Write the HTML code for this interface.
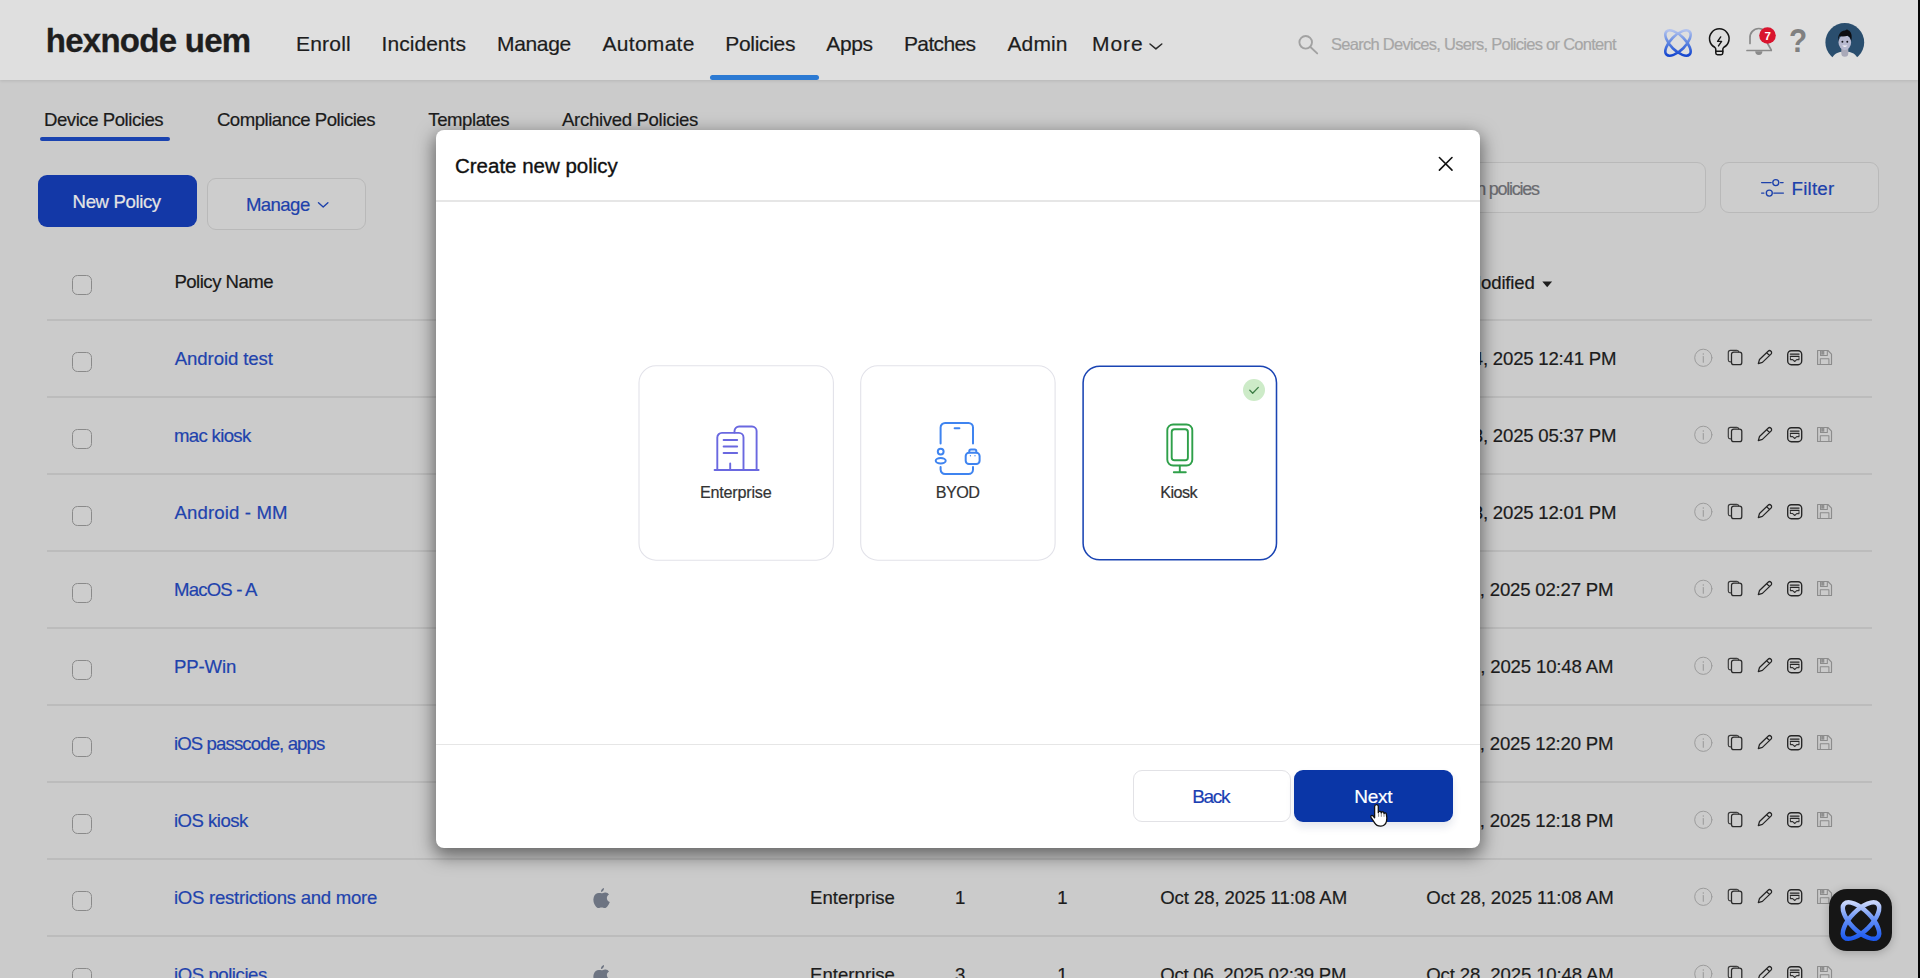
<!DOCTYPE html>
<html lang="en"><head><meta charset="utf-8"><title>Hexnode UEM - Policies</title>
<style>
html,body{margin:0;padding:0}
body{width:1920px;height:978px;overflow:hidden;position:relative;background:#cbcbcb;font-family:"Liberation Sans",sans-serif}
.a{position:absolute}
.t{position:absolute;white-space:nowrap;font-family:"Liberation Sans",sans-serif;-webkit-text-stroke:.2px currentColor}
svg{position:absolute;overflow:visible}
#hdr{left:0;top:0;width:1918px;height:80px;background:#dfdfdf;box-shadow:0 1px 3px rgba(0,0,0,.10)}
#edge{left:1918px;top:0;width:2px;height:978px;background:#050505}
.nu{left:710px;top:75.4px;width:109.3px;height:4.6px;border-radius:2.5px;background:#2c7ad3}
.tu{left:39.5px;top:137.3px;width:130px;height:3.6px;border-radius:2px;background:#1a43b0}
.btnp{left:38px;top:175px;width:159px;height:52px;border-radius:9px;background:#1338a7}
.btno{border:1px solid #b9b9b9;border-radius:9px;box-sizing:border-box;background:#cdcdcd}
.hl{left:46.5px;width:1825.5px;height:1.8px;background:#bcbcbc}
.cb{left:72px;width:18.4px;height:18px;border:1px solid #8a8a8a;border-radius:5.5px;background:#cdcdcd}
#modal{left:436px;top:130px;width:1044px;height:718px;background:#fff;border-radius:8px;box-shadow:0 6px 18px 2px rgba(0,0,0,.5)}
.ml{left:436px;width:1044px;height:1.6px;background:#e6e6e6}
.bback{left:1133px;top:770.3px;width:156px;height:50px;border:1px solid #e2e2e6;border-radius:9px;background:#fff}
.bnext{left:1294.4px;top:770px;width:159px;height:52px;border-radius:9px;background:#0a36a7;box-shadow:0 5px 9px rgba(20,40,90,.11)}
#chat{left:1829px;top:888.8px;width:62.5px;height:62.5px;border-radius:18px;background:#161616;box-shadow:0 2px 10px rgba(0,0,0,.22)}

</style></head>
<body>
<div id="hdr" class="a"></div>
<div class="a nu"></div>
<div class="a tu"></div>
<div class="a btnp"></div>
<div class="a btno" style="left:207px;top:178.3px;width:159px;height:51.3px"></div>
<div class="a btno" style="left:1300px;top:162.3px;width:406px;height:51px"></div>
<div class="a btno" style="left:1720.2px;top:162.3px;width:158.6px;height:51px"></div>
<div class="a hl" style="top:318.8px"></div>
<div class="a hl" style="top:395.8px"></div>
<div class="a hl" style="top:472.8px"></div>
<div class="a hl" style="top:549.8px"></div>
<div class="a hl" style="top:626.8px"></div>
<div class="a hl" style="top:703.8px"></div>
<div class="a hl" style="top:780.8px"></div>
<div class="a hl" style="top:857.8px"></div>
<div class="a hl" style="top:934.8px"></div>
<div class="a cb" style="top:275px"></div>
<div class="a cb" style="top:352px"></div>
<div class="a cb" style="top:429px"></div>
<div class="a cb" style="top:506px"></div>
<div class="a cb" style="top:583px"></div>
<div class="a cb" style="top:660px"></div>
<div class="a cb" style="top:737px"></div>
<div class="a cb" style="top:814px"></div>
<div class="a cb" style="top:891px"></div>
<div class="a cb" style="top:968px"></div>
<svg class="a" style="left:1694px;top:348px" width="142" height="20" viewBox="0 0 142 20" ><g fill="none" stroke-linecap="round" stroke-linejoin="round">
<circle cx="9.3" cy="9.8" r="8.6" stroke="#9c9c9c" stroke-width="1"/>
<path d="M9.3 8.6v5.6" stroke="#9c9c9c" stroke-width="1.1"/><circle cx="9.3" cy="5.9" r=".75" fill="#9c9c9c"/>
<path d="M36.6 13.8h-.4a1.9 1.9 0 0 1-1.9-1.9V4.4a2.1 2.1 0 0 1 2.1-2.1h6.3a2 2 0 0 1 2 1.7" stroke="#3a3a3a" stroke-width="1.15"/>
<rect x="37.5" y="4" width="10.3" height="12.7" rx="2.3" stroke="#2a2a2a" stroke-width="1.25"/>
<path d="M64.3 15.6l1.2-4.1 8.600-8.300a2.050 2.050 0 0 1 2.900 2.900l-8.600 8.300z M72.6 4.600l2.900 2.900" stroke="#262626" stroke-width="1.25"/>
<rect x="93.700" y="2.700" width="14" height="14" rx="3.600" stroke="#262626" stroke-width="1.35"/>
<path d="M96.400 6.100h8.600M96.400 8.300h8.600" stroke="#262626" stroke-width="1.35"/>
<path d="M96.400 9.400v2.200h2.300l2 1.900 2-1.900h2.300V9.400" stroke="#333" stroke-width="1.05"/>
<path d="M123.600 2.500h10.300l3.600 3.600v10.400h-13.900z" stroke="#8c8c8c" stroke-width="1.15"/>
<path d="M126.500 2.600v4.900h6.800V2.600" stroke="#8c8c8c" stroke-width="1.05"/><rect x="127.200" y="2.800" width="3.100" height="3.900" fill="#8f8f8f"/>
<path d="M126.300 16.400v-5.600h8.600v5.600" stroke="#8c8c8c" stroke-width="1.05"/>
</g></svg>
<svg class="a" style="left:1694px;top:425px" width="142" height="20" viewBox="0 0 142 20" ><g fill="none" stroke-linecap="round" stroke-linejoin="round">
<circle cx="9.3" cy="9.8" r="8.6" stroke="#9c9c9c" stroke-width="1"/>
<path d="M9.3 8.6v5.6" stroke="#9c9c9c" stroke-width="1.1"/><circle cx="9.3" cy="5.9" r=".75" fill="#9c9c9c"/>
<path d="M36.6 13.8h-.4a1.9 1.9 0 0 1-1.9-1.9V4.4a2.1 2.1 0 0 1 2.1-2.1h6.3a2 2 0 0 1 2 1.7" stroke="#3a3a3a" stroke-width="1.15"/>
<rect x="37.5" y="4" width="10.3" height="12.7" rx="2.3" stroke="#2a2a2a" stroke-width="1.25"/>
<path d="M64.3 15.6l1.2-4.1 8.600-8.300a2.050 2.050 0 0 1 2.900 2.900l-8.600 8.300z M72.6 4.600l2.900 2.900" stroke="#262626" stroke-width="1.25"/>
<rect x="93.700" y="2.700" width="14" height="14" rx="3.600" stroke="#262626" stroke-width="1.35"/>
<path d="M96.400 6.100h8.600M96.400 8.300h8.600" stroke="#262626" stroke-width="1.35"/>
<path d="M96.400 9.400v2.200h2.300l2 1.900 2-1.900h2.300V9.400" stroke="#333" stroke-width="1.05"/>
<path d="M123.600 2.500h10.300l3.600 3.600v10.400h-13.900z" stroke="#8c8c8c" stroke-width="1.15"/>
<path d="M126.500 2.600v4.900h6.800V2.600" stroke="#8c8c8c" stroke-width="1.05"/><rect x="127.200" y="2.800" width="3.100" height="3.900" fill="#8f8f8f"/>
<path d="M126.300 16.400v-5.600h8.600v5.600" stroke="#8c8c8c" stroke-width="1.05"/>
</g></svg>
<svg class="a" style="left:1694px;top:502px" width="142" height="20" viewBox="0 0 142 20" ><g fill="none" stroke-linecap="round" stroke-linejoin="round">
<circle cx="9.3" cy="9.8" r="8.6" stroke="#9c9c9c" stroke-width="1"/>
<path d="M9.3 8.6v5.6" stroke="#9c9c9c" stroke-width="1.1"/><circle cx="9.3" cy="5.9" r=".75" fill="#9c9c9c"/>
<path d="M36.6 13.8h-.4a1.9 1.9 0 0 1-1.9-1.9V4.4a2.1 2.1 0 0 1 2.1-2.1h6.3a2 2 0 0 1 2 1.7" stroke="#3a3a3a" stroke-width="1.15"/>
<rect x="37.5" y="4" width="10.3" height="12.7" rx="2.3" stroke="#2a2a2a" stroke-width="1.25"/>
<path d="M64.3 15.6l1.2-4.1 8.600-8.300a2.050 2.050 0 0 1 2.900 2.900l-8.600 8.300z M72.6 4.600l2.900 2.900" stroke="#262626" stroke-width="1.25"/>
<rect x="93.700" y="2.700" width="14" height="14" rx="3.600" stroke="#262626" stroke-width="1.35"/>
<path d="M96.400 6.100h8.600M96.400 8.300h8.600" stroke="#262626" stroke-width="1.35"/>
<path d="M96.400 9.400v2.200h2.300l2 1.900 2-1.900h2.300V9.400" stroke="#333" stroke-width="1.05"/>
<path d="M123.600 2.500h10.300l3.600 3.600v10.400h-13.900z" stroke="#8c8c8c" stroke-width="1.15"/>
<path d="M126.500 2.600v4.900h6.800V2.600" stroke="#8c8c8c" stroke-width="1.05"/><rect x="127.200" y="2.800" width="3.100" height="3.900" fill="#8f8f8f"/>
<path d="M126.300 16.400v-5.600h8.600v5.600" stroke="#8c8c8c" stroke-width="1.05"/>
</g></svg>
<svg class="a" style="left:1694px;top:579px" width="142" height="20" viewBox="0 0 142 20" ><g fill="none" stroke-linecap="round" stroke-linejoin="round">
<circle cx="9.3" cy="9.8" r="8.6" stroke="#9c9c9c" stroke-width="1"/>
<path d="M9.3 8.6v5.6" stroke="#9c9c9c" stroke-width="1.1"/><circle cx="9.3" cy="5.9" r=".75" fill="#9c9c9c"/>
<path d="M36.6 13.8h-.4a1.9 1.9 0 0 1-1.9-1.9V4.4a2.1 2.1 0 0 1 2.1-2.1h6.3a2 2 0 0 1 2 1.7" stroke="#3a3a3a" stroke-width="1.15"/>
<rect x="37.5" y="4" width="10.3" height="12.7" rx="2.3" stroke="#2a2a2a" stroke-width="1.25"/>
<path d="M64.3 15.6l1.2-4.1 8.600-8.300a2.050 2.050 0 0 1 2.900 2.900l-8.600 8.300z M72.6 4.600l2.900 2.900" stroke="#262626" stroke-width="1.25"/>
<rect x="93.700" y="2.700" width="14" height="14" rx="3.600" stroke="#262626" stroke-width="1.35"/>
<path d="M96.400 6.100h8.600M96.400 8.300h8.600" stroke="#262626" stroke-width="1.35"/>
<path d="M96.400 9.400v2.200h2.300l2 1.900 2-1.900h2.300V9.400" stroke="#333" stroke-width="1.05"/>
<path d="M123.600 2.500h10.300l3.600 3.600v10.400h-13.900z" stroke="#8c8c8c" stroke-width="1.15"/>
<path d="M126.500 2.600v4.900h6.800V2.600" stroke="#8c8c8c" stroke-width="1.05"/><rect x="127.200" y="2.800" width="3.100" height="3.900" fill="#8f8f8f"/>
<path d="M126.300 16.400v-5.600h8.600v5.600" stroke="#8c8c8c" stroke-width="1.05"/>
</g></svg>
<svg class="a" style="left:1694px;top:656px" width="142" height="20" viewBox="0 0 142 20" ><g fill="none" stroke-linecap="round" stroke-linejoin="round">
<circle cx="9.3" cy="9.8" r="8.6" stroke="#9c9c9c" stroke-width="1"/>
<path d="M9.3 8.6v5.6" stroke="#9c9c9c" stroke-width="1.1"/><circle cx="9.3" cy="5.9" r=".75" fill="#9c9c9c"/>
<path d="M36.6 13.8h-.4a1.9 1.9 0 0 1-1.9-1.9V4.4a2.1 2.1 0 0 1 2.1-2.1h6.3a2 2 0 0 1 2 1.7" stroke="#3a3a3a" stroke-width="1.15"/>
<rect x="37.5" y="4" width="10.3" height="12.7" rx="2.3" stroke="#2a2a2a" stroke-width="1.25"/>
<path d="M64.3 15.6l1.2-4.1 8.600-8.300a2.050 2.050 0 0 1 2.900 2.900l-8.600 8.300z M72.6 4.600l2.900 2.900" stroke="#262626" stroke-width="1.25"/>
<rect x="93.700" y="2.700" width="14" height="14" rx="3.600" stroke="#262626" stroke-width="1.35"/>
<path d="M96.400 6.100h8.600M96.400 8.300h8.600" stroke="#262626" stroke-width="1.35"/>
<path d="M96.400 9.400v2.200h2.300l2 1.900 2-1.900h2.300V9.400" stroke="#333" stroke-width="1.05"/>
<path d="M123.600 2.500h10.300l3.600 3.600v10.400h-13.900z" stroke="#8c8c8c" stroke-width="1.15"/>
<path d="M126.500 2.600v4.900h6.800V2.600" stroke="#8c8c8c" stroke-width="1.05"/><rect x="127.200" y="2.800" width="3.100" height="3.900" fill="#8f8f8f"/>
<path d="M126.300 16.400v-5.600h8.600v5.600" stroke="#8c8c8c" stroke-width="1.05"/>
</g></svg>
<svg class="a" style="left:1694px;top:733px" width="142" height="20" viewBox="0 0 142 20" ><g fill="none" stroke-linecap="round" stroke-linejoin="round">
<circle cx="9.3" cy="9.8" r="8.6" stroke="#9c9c9c" stroke-width="1"/>
<path d="M9.3 8.6v5.6" stroke="#9c9c9c" stroke-width="1.1"/><circle cx="9.3" cy="5.9" r=".75" fill="#9c9c9c"/>
<path d="M36.6 13.8h-.4a1.9 1.9 0 0 1-1.9-1.9V4.4a2.1 2.1 0 0 1 2.1-2.1h6.3a2 2 0 0 1 2 1.7" stroke="#3a3a3a" stroke-width="1.15"/>
<rect x="37.5" y="4" width="10.3" height="12.7" rx="2.3" stroke="#2a2a2a" stroke-width="1.25"/>
<path d="M64.3 15.6l1.2-4.1 8.600-8.300a2.050 2.050 0 0 1 2.900 2.900l-8.600 8.300z M72.6 4.600l2.900 2.900" stroke="#262626" stroke-width="1.25"/>
<rect x="93.700" y="2.700" width="14" height="14" rx="3.600" stroke="#262626" stroke-width="1.35"/>
<path d="M96.400 6.100h8.600M96.400 8.300h8.600" stroke="#262626" stroke-width="1.35"/>
<path d="M96.400 9.400v2.200h2.300l2 1.900 2-1.900h2.300V9.400" stroke="#333" stroke-width="1.05"/>
<path d="M123.600 2.500h10.300l3.600 3.600v10.400h-13.900z" stroke="#8c8c8c" stroke-width="1.15"/>
<path d="M126.500 2.600v4.900h6.800V2.600" stroke="#8c8c8c" stroke-width="1.05"/><rect x="127.200" y="2.800" width="3.100" height="3.900" fill="#8f8f8f"/>
<path d="M126.300 16.400v-5.600h8.600v5.600" stroke="#8c8c8c" stroke-width="1.05"/>
</g></svg>
<svg class="a" style="left:1694px;top:810px" width="142" height="20" viewBox="0 0 142 20" ><g fill="none" stroke-linecap="round" stroke-linejoin="round">
<circle cx="9.3" cy="9.8" r="8.6" stroke="#9c9c9c" stroke-width="1"/>
<path d="M9.3 8.6v5.6" stroke="#9c9c9c" stroke-width="1.1"/><circle cx="9.3" cy="5.9" r=".75" fill="#9c9c9c"/>
<path d="M36.6 13.8h-.4a1.9 1.9 0 0 1-1.9-1.9V4.4a2.1 2.1 0 0 1 2.1-2.1h6.3a2 2 0 0 1 2 1.7" stroke="#3a3a3a" stroke-width="1.15"/>
<rect x="37.5" y="4" width="10.3" height="12.7" rx="2.3" stroke="#2a2a2a" stroke-width="1.25"/>
<path d="M64.3 15.6l1.2-4.1 8.600-8.300a2.050 2.050 0 0 1 2.900 2.900l-8.600 8.300z M72.6 4.600l2.900 2.900" stroke="#262626" stroke-width="1.25"/>
<rect x="93.700" y="2.700" width="14" height="14" rx="3.600" stroke="#262626" stroke-width="1.35"/>
<path d="M96.400 6.100h8.600M96.400 8.300h8.600" stroke="#262626" stroke-width="1.35"/>
<path d="M96.400 9.400v2.200h2.300l2 1.900 2-1.900h2.300V9.400" stroke="#333" stroke-width="1.05"/>
<path d="M123.600 2.500h10.300l3.600 3.600v10.400h-13.900z" stroke="#8c8c8c" stroke-width="1.15"/>
<path d="M126.500 2.600v4.900h6.800V2.600" stroke="#8c8c8c" stroke-width="1.05"/><rect x="127.200" y="2.800" width="3.100" height="3.900" fill="#8f8f8f"/>
<path d="M126.300 16.400v-5.600h8.600v5.600" stroke="#8c8c8c" stroke-width="1.05"/>
</g></svg>
<svg class="a" style="left:1694px;top:887px" width="142" height="20" viewBox="0 0 142 20" ><g fill="none" stroke-linecap="round" stroke-linejoin="round">
<circle cx="9.3" cy="9.8" r="8.6" stroke="#9c9c9c" stroke-width="1"/>
<path d="M9.3 8.6v5.6" stroke="#9c9c9c" stroke-width="1.1"/><circle cx="9.3" cy="5.9" r=".75" fill="#9c9c9c"/>
<path d="M36.6 13.8h-.4a1.9 1.9 0 0 1-1.9-1.9V4.4a2.1 2.1 0 0 1 2.1-2.1h6.3a2 2 0 0 1 2 1.7" stroke="#3a3a3a" stroke-width="1.15"/>
<rect x="37.5" y="4" width="10.3" height="12.7" rx="2.3" stroke="#2a2a2a" stroke-width="1.25"/>
<path d="M64.3 15.6l1.2-4.1 8.600-8.300a2.050 2.050 0 0 1 2.900 2.900l-8.600 8.300z M72.6 4.600l2.900 2.900" stroke="#262626" stroke-width="1.25"/>
<rect x="93.700" y="2.700" width="14" height="14" rx="3.600" stroke="#262626" stroke-width="1.35"/>
<path d="M96.400 6.100h8.600M96.400 8.300h8.600" stroke="#262626" stroke-width="1.35"/>
<path d="M96.400 9.400v2.200h2.300l2 1.900 2-1.900h2.300V9.400" stroke="#333" stroke-width="1.05"/>
<path d="M123.600 2.500h10.300l3.600 3.600v10.400h-13.900z" stroke="#8c8c8c" stroke-width="1.15"/>
<path d="M126.500 2.600v4.900h6.800V2.600" stroke="#8c8c8c" stroke-width="1.05"/><rect x="127.200" y="2.800" width="3.100" height="3.900" fill="#8f8f8f"/>
<path d="M126.300 16.400v-5.600h8.600v5.600" stroke="#8c8c8c" stroke-width="1.05"/>
</g></svg>
<svg class="a" style="left:1694px;top:964px" width="142" height="20" viewBox="0 0 142 20" ><g fill="none" stroke-linecap="round" stroke-linejoin="round">
<circle cx="9.3" cy="9.8" r="8.6" stroke="#9c9c9c" stroke-width="1"/>
<path d="M9.3 8.6v5.6" stroke="#9c9c9c" stroke-width="1.1"/><circle cx="9.3" cy="5.9" r=".75" fill="#9c9c9c"/>
<path d="M36.6 13.8h-.4a1.9 1.9 0 0 1-1.9-1.9V4.4a2.1 2.1 0 0 1 2.1-2.1h6.3a2 2 0 0 1 2 1.7" stroke="#3a3a3a" stroke-width="1.15"/>
<rect x="37.5" y="4" width="10.3" height="12.7" rx="2.3" stroke="#2a2a2a" stroke-width="1.25"/>
<path d="M64.3 15.6l1.2-4.1 8.600-8.300a2.050 2.050 0 0 1 2.900 2.900l-8.600 8.300z M72.6 4.600l2.900 2.900" stroke="#262626" stroke-width="1.25"/>
<rect x="93.700" y="2.700" width="14" height="14" rx="3.600" stroke="#262626" stroke-width="1.35"/>
<path d="M96.400 6.100h8.600M96.400 8.300h8.600" stroke="#262626" stroke-width="1.35"/>
<path d="M96.400 9.400v2.200h2.300l2 1.900 2-1.900h2.300V9.400" stroke="#333" stroke-width="1.05"/>
<path d="M123.600 2.500h10.300l3.600 3.600v10.400h-13.900z" stroke="#8c8c8c" stroke-width="1.15"/>
<path d="M126.500 2.600v4.900h6.800V2.600" stroke="#8c8c8c" stroke-width="1.05"/><rect x="127.200" y="2.800" width="3.100" height="3.900" fill="#8f8f8f"/>
<path d="M126.300 16.400v-5.600h8.600v5.600" stroke="#8c8c8c" stroke-width="1.05"/>
</g></svg>
<svg class="a" style="left:593.2px;top:887.6px" width="17" height="20.2" viewBox="0 0 17 20" ><path transform="scale(.1)" fill="#6d7482" d="M110 0C112 18 100 38 80 40C77 22 92 3 110 0ZM85 52C95 52 108 42 125 44C140 45 152 52 160 64C145 73 137 88 139 104C141 122 152 134 168 140C163 155 155 170 145 182C137 192 128 200 117 200C105 200 100 193 86 193C72 193 66 200 55 200C44 200 35 191 27 181C8 157 -3 118 8 88C16 66 36 50 57 50C68 50 78 52 85 52Z"/></svg>
<svg class="a" style="left:593.2px;top:964.6px" width="17" height="20.2" viewBox="0 0 17 20" ><path transform="scale(.1)" fill="#6d7482" d="M110 0C112 18 100 38 80 40C77 22 92 3 110 0ZM85 52C95 52 108 42 125 44C140 45 152 52 160 64C145 73 137 88 139 104C141 122 152 134 168 140C163 155 155 170 145 182C137 192 128 200 117 200C105 200 100 193 86 193C72 193 66 200 55 200C44 200 35 191 27 181C8 157 -3 118 8 88C16 66 36 50 57 50C68 50 78 52 85 52Z"/></svg>
<svg class="a" style="left:1296px;top:33px" width="24" height="24" viewBox="0 0 24 24" ><g fill="none" stroke="#a2a2a2" stroke-width="1.9" stroke-linecap="round"><circle cx="9.700" cy="9.300" r="6.300"/><path d="M14.400 14l6.800 6.400"/></g></svg>
<svg class="a" style="left:1148px;top:42px" width="16" height="9" viewBox="0 0 16 9" ><path d="M2 2l5.900 4.900L13.800 2" fill="none" stroke="#2a2a2a" stroke-width="1.5" stroke-linecap="round" stroke-linejoin="round"/></svg>
<svg class="a" style="left:317px;top:201px" width="14" height="8" viewBox="0 0 14 8" ><path d="M1.500 1.800l4.700 4.200 4.700-4.200" fill="none" stroke="#1d41ab" stroke-width="1.4" stroke-linecap="round" stroke-linejoin="round"/></svg>
<svg class="a" style="left:1542px;top:280.6px" width="11" height="7" viewBox="0 0 11 7" ><path d="M.3.400h9.800L5.200 6.300z" fill="#1c1c1c"/></svg>
<svg class="a" style="left:1760px;top:177px" width="26" height="22" viewBox="0 0 26 22" ><g fill="none" stroke="#1d41ab" stroke-width="1.35" stroke-linecap="round"><path d="M1.600 5.600h9.600M20.500 5.600h2.600"/><circle cx="15.800" cy="5.600" r="3"/><path d="M1.600 16.100h2.300M13.800 16.100h9.600"/><circle cx="9.300" cy="16.100" r="3"/></g></svg>
<svg class="a" style="left:1660px;top:25px" width="36" height="36" viewBox="0 0 36 36" ><defs><linearGradient id="ga" gradientUnits="userSpaceOnUse" x1="18" y1="5.3" x2="18" y2="30.7"><stop offset="0" stop-color="#b3c3ee"/><stop offset=".5" stop-color="#5b83e0"/><stop offset="1" stop-color="#1546cf"/></linearGradient></defs><g fill="none" stroke="url(#ga)" stroke-width="2.6"><path d="M6.47 6.47A16.3 7.4 45 1 0 29.53 29.53A16.3 7.4 45 1 0 6.47 6.47Z"/><path d="M29.53 6.47A16.3 7.4 -45 1 0 6.47 29.53A16.3 7.4 -45 1 0 29.53 6.47Z"/></g></svg>
<svg class="a" style="left:1705px;top:24px" width="30" height="34" viewBox="0 0 30 34" ><g fill="none" stroke="#161616" stroke-width="1.55" stroke-linecap="round" stroke-linejoin="round"><path d="M10.800 27.300v-1.500c0-1.400-.400-1.950-1.100-2.550A9.800 9.800 0 1 1 18.900 23.250c-.700.600-1.100 1.150-1.100 2.550v1.500"/><path d="M10.800 27.300h7v1.700a1.700 1.700 0 0 1-1.700 1.700h-3.600a1.700 1.700 0 0 1-1.700-1.700z"/><path d="M15.700 12.900l-3.100 4.500h4l-3.100 4.500" stroke-width="1.400"/></g></svg>
<svg class="a" style="left:1744px;top:24px" width="32" height="34" viewBox="0 0 32 34" ><g fill="none" stroke="#8a8a8a" stroke-width="1.7" stroke-linecap="round" stroke-linejoin="round"><path d="M6 19.500v-5.500a8.800 8.800 0 0 1 8.800-9.500a8.800 8.800 0 0 1 8.800 9.500v5.500l3.600 6.400"/><path d="M3 26.500h24.300"/></g><path d="M11.200 27.300a3.600 3.600 0 0 0 7.200 0z" fill="#8a8a8a"/><circle cx="23.500" cy="11.5" r="8.300" fill="#d9142e"/></svg>
<svg class="a" style="left:1824px;top:22px" width="42" height="42" viewBox="0 0 42 42" ><defs><clipPath id="av"><circle cx="20.800" cy="20.400" r="19.400"/></clipPath></defs><circle cx="20.800" cy="20.400" r="19.400" fill="#2a4e6e"/><path d="M6.500 42c.500-6.500 3.500-10.500 9.500-12l4.800-.800 4.800.800c6 1.500 9 5.500 9.500 12z" fill="#dfdfdf"/><g clip-path="url(#av)"><path d="M17.300 26h7v5.200a3.500 3.500 0 0 1-7 0z" fill="#a9a9b8"/><ellipse cx="20.800" cy="20.500" rx="6.300" ry="7.600" fill="#b8b9d0"/><path d="M14.300 19.500c-.800-6 1.500-10.500 6.800-11 1.200-1.400 2.600-1.300 3.200-.300 3 1.200 4 5.500 3 10.800-.800-3-1.800-4.600-3.600-5.200-3 .900-6.500.800-8 .300-.800 1.500-1.200 3-1.400 5.400z" fill="#0e0e12"/><circle cx="18.400" cy="19.800" r=".95" fill="#15151c"/><circle cx="23.300" cy="19.800" r=".95" fill="#15151c"/><path d="M18.200 23.600c1.600 1.700 3.700 1.700 5.300 0z" fill="#f4f4f8"/></g></svg>
<div class="t" style="left:45.80px;top:20.37px;font-size:33px;line-height:41px;letter-spacing:-0.737px;color:#1e1e1e;font-weight:700;-webkit-text-stroke:.3px #1e1e1e;">hexnode uem</div>
<div class="t" style="left:296.00px;top:30.87px;font-size:21px;line-height:26px;letter-spacing:0.195px;color:#1d1d1d;">Enroll</div>
<div class="t" style="left:381.50px;top:30.87px;font-size:21px;line-height:26px;letter-spacing:0.056px;color:#1d1d1d;">Incidents</div>
<div class="t" style="left:497.00px;top:30.87px;font-size:21px;line-height:26px;letter-spacing:-0.342px;color:#1d1d1d;">Manage</div>
<div class="t" style="left:602.50px;top:30.87px;font-size:21px;line-height:26px;letter-spacing:0.292px;color:#1d1d1d;">Automate</div>
<div class="t" style="left:725.25px;top:30.87px;font-size:21px;line-height:26px;letter-spacing:-0.302px;color:#1d1d1d;">Policies</div>
<div class="t" style="left:826.25px;top:30.87px;font-size:21px;line-height:26px;letter-spacing:-0.372px;color:#1d1d1d;">Apps</div>
<div class="t" style="left:904.00px;top:30.87px;font-size:21px;line-height:26px;letter-spacing:-0.646px;color:#1d1d1d;">Patches</div>
<div class="t" style="left:1007.50px;top:30.87px;font-size:21px;line-height:26px;letter-spacing:0.101px;color:#1d1d1d;">Admin</div>
<div class="t" style="left:1092.00px;top:30.87px;font-size:21px;line-height:26px;letter-spacing:0.945px;color:#1d1d1d;">More</div>
<div class="t" style="left:1331.00px;top:33.88px;font-size:16.5px;line-height:21px;letter-spacing:-0.729px;color:#a6a6a6;">Search Devices, Users, Policies or Content</div>
<div class="t" style="left:44.00px;top:107.86px;font-size:18.6px;line-height:23px;letter-spacing:-0.462px;color:#1c1c1c;">Device Policies</div>
<div class="t" style="left:216.90px;top:107.86px;font-size:18.6px;line-height:23px;letter-spacing:-0.490px;color:#1c1c1c;">Compliance Policies</div>
<div class="t" style="left:428.30px;top:107.86px;font-size:18.6px;line-height:23px;letter-spacing:-0.443px;color:#1c1c1c;">Templates</div>
<div class="t" style="left:562.00px;top:107.86px;font-size:18.6px;line-height:23px;letter-spacing:-0.330px;color:#1c1c1c;">Archived Policies</div>
<div class="t" style="left:72.60px;top:190.16px;font-size:18.6px;line-height:23px;letter-spacing:-0.385px;color:#e4e4e4;">New Policy</div>
<div class="t" style="left:245.90px;top:193.46px;font-size:18.6px;line-height:23px;letter-spacing:-0.571px;color:#1d41ab;">Manage</div>
<div class="t" style="left:1433.00px;top:177.56px;font-size:18px;line-height:22px;letter-spacing:-0.764px;color:#6a6b70;">Search</div>
<div class="t" style="left:1488.70px;top:177.56px;font-size:18px;line-height:22px;letter-spacing:-1.233px;color:#6a6b70;">policies</div>
<div class="t" style="left:1791.50px;top:177.19px;font-size:18.8px;line-height:24px;letter-spacing:0.204px;color:#1d41ab;">Filter</div>
<div class="t" style="left:174.40px;top:270.36px;font-size:18.6px;line-height:23px;letter-spacing:-0.512px;color:#1a1a1a;">Policy Name</div>
<div class="t" style="left:1426.30px;top:270.56px;font-size:18.6px;line-height:23px;letter-spacing:-0.171px;color:#1a1a1a;">Last Modified</div>
<div class="t" style="left:174.80px;top:347.46px;font-size:18.6px;line-height:23px;letter-spacing:-0.101px;color:#1f43ad;">Android test</div>
<div class="t" style="left:1425.30px;top:347.46px;font-size:18.6px;line-height:23px;letter-spacing:-0.209px;color:#1c1c1c;">Nov 04, 2025 12:41 PM</div>
<div class="t" style="left:174.00px;top:424.46px;font-size:18.6px;line-height:23px;letter-spacing:-0.670px;color:#1f43ad;">mac kiosk</div>
<div class="t" style="left:1425.30px;top:424.46px;font-size:18.6px;line-height:23px;letter-spacing:-0.209px;color:#1c1c1c;">Nov 03, 2025 05:37 PM</div>
<div class="t" style="left:174.60px;top:501.46px;font-size:18.6px;line-height:23px;letter-spacing:0.118px;color:#1f43ad;">Android - MM</div>
<div class="t" style="left:1425.30px;top:501.46px;font-size:18.6px;line-height:23px;letter-spacing:-0.209px;color:#1c1c1c;">Nov 03, 2025 12:01 PM</div>
<div class="t" style="left:174.00px;top:578.46px;font-size:18.6px;line-height:23px;letter-spacing:-0.814px;color:#1f43ad;">MacOS - A</div>
<div class="t" style="left:1426.30px;top:578.46px;font-size:18.6px;line-height:23px;letter-spacing:-0.202px;color:#1c1c1c;">Oct 31, 2025 02:27 PM</div>
<div class="t" style="left:174.00px;top:655.46px;font-size:18.6px;line-height:23px;letter-spacing:-0.135px;color:#1f43ad;">PP-Win</div>
<div class="t" style="left:1426.30px;top:655.46px;font-size:18.6px;line-height:23px;letter-spacing:-0.152px;color:#1c1c1c;">Oct 28, 2025 10:48 AM</div>
<div class="t" style="left:174.00px;top:732.46px;font-size:18.6px;line-height:23px;letter-spacing:-0.889px;color:#1f43ad;">iOS passcode, apps</div>
<div class="t" style="left:1426.30px;top:732.46px;font-size:18.6px;line-height:23px;letter-spacing:-0.202px;color:#1c1c1c;">Oct 28, 2025 12:20 PM</div>
<div class="t" style="left:174.00px;top:809.46px;font-size:18.6px;line-height:23px;letter-spacing:-0.528px;color:#1f43ad;">iOS kiosk</div>
<div class="t" style="left:1426.30px;top:809.46px;font-size:18.6px;line-height:23px;letter-spacing:-0.202px;color:#1c1c1c;">Oct 28, 2025 12:18 PM</div>
<div class="t" style="left:174.00px;top:886.46px;font-size:18.6px;line-height:23px;letter-spacing:-0.268px;color:#1f43ad;">iOS restrictions and more</div>
<div class="t" style="left:1426.30px;top:886.46px;font-size:18.6px;line-height:23px;letter-spacing:-0.068px;color:#1c1c1c;">Oct 28, 2025 11:08 AM</div>
<div class="t" style="left:174.00px;top:963.46px;font-size:18.6px;line-height:23px;letter-spacing:-0.443px;color:#1f43ad;">iOS policies</div>
<div class="t" style="left:1426.30px;top:963.46px;font-size:18.6px;line-height:23px;letter-spacing:-0.137px;color:#1c1c1c;">Oct 28, 2025 10:48 AM</div>
<div class="t" style="left:810.00px;top:886.46px;font-size:18.6px;line-height:23px;letter-spacing:0.022px;color:#1c1c1c;">Enterprise</div>
<div class="t" style="left:955.00px;top:886.46px;font-size:18.6px;line-height:23px;letter-spacing:0.000px;color:#1c1c1c;">1</div>
<div class="t" style="left:1057.30px;top:886.46px;font-size:18.6px;line-height:23px;letter-spacing:0.000px;color:#1c1c1c;">1</div>
<div class="t" style="left:1160.20px;top:886.46px;font-size:18.6px;line-height:23px;letter-spacing:-0.093px;color:#1c1c1c;">Oct 28, 2025 11:08 AM</div>
<div class="t" style="left:810.00px;top:963.46px;font-size:18.6px;line-height:23px;letter-spacing:0.022px;color:#1c1c1c;">Enterprise</div>
<div class="t" style="left:955.00px;top:963.46px;font-size:18.6px;line-height:23px;letter-spacing:0.000px;color:#1c1c1c;">3</div>
<div class="t" style="left:1057.30px;top:963.46px;font-size:18.6px;line-height:23px;letter-spacing:0.000px;color:#1c1c1c;">1</div>
<div class="t" style="left:1160.20px;top:963.46px;font-size:18.6px;line-height:23px;letter-spacing:-0.247px;color:#1c1c1c;">Oct 06, 2025 02:39 PM</div>
<div class="t" style="left:1764.40px;top:28.82px;font-size:11.5px;line-height:14px;letter-spacing:0.000px;color:#fff;font-weight:700;-webkit-text-stroke:0;">7</div>
<div class="t" style="left:1789.40px;top:20.37px;font-size:33px;line-height:41px;letter-spacing:0.000px;color:#808080;font-weight:700;transform:scaleX(.9);transform-origin:0 0;-webkit-text-stroke:0;">?</div>
<div id="chat" class="a"></div>
<svg class="a" style="left:1835px;top:894px" width="52" height="52" viewBox="0 0 52 52" ><defs><linearGradient id="gb" gradientUnits="userSpaceOnUse" x1="26" y1="8.4" x2="26" y2="44.8"><stop offset="0" stop-color="#c9d6fb"/><stop offset=".5" stop-color="#5f8cf6"/><stop offset="1" stop-color="#1d5af0"/></linearGradient></defs><g fill="none" stroke="url(#gb)" stroke-width="4.5"><path d="M9.31 9.91A23.6 10.2 45 1 0 42.69 43.29A23.6 10.2 45 1 0 9.31 9.91Z"/><path d="M42.69 9.91A23.6 10.2 -45 1 0 9.31 43.29A23.6 10.2 -45 1 0 42.69 9.91Z"/></g></svg>
<div id="modal" class="a"></div>
<div class="a ml" style="top:200.3px"></div>
<div class="a ml" style="top:743.8px"></div>
<svg class="a" style="left:630px;top:357px" width="660" height="212" viewBox="630 357 660 212"><g fill="#fff"><rect x="639" y="365.800" width="194.400" height="194.400" rx="17" stroke="#e2e2e9" stroke-width="1.100"/><rect x="860.700" y="365.800" width="194.400" height="194.400" rx="17" stroke="#e2e2e9" stroke-width="1.100"/><rect x="1083.100" y="366.200" width="193.400" height="193.600" rx="16.500" stroke="#1a44b3" stroke-width="1.550"/></g></svg>
<div class="a bback"></div>
<div class="a bnext"></div>
<svg class="a" style="left:1436px;top:154px" width="20" height="20" viewBox="0 0 20 20" ><path d="M3.400 3.500l12.600 12.600M16 3.500L3.400 16.100" stroke="#111" stroke-width="1.6" stroke-linecap="round" fill="none"/></svg>
<svg class="a" style="left:706px;top:418px" width="60" height="60" viewBox="0 0 60 60" ><g fill="none" stroke="#6a68e0" stroke-width="1.9" stroke-linecap="round" stroke-linejoin="round"><path d="M8.600 52H52.600"/><path d="M11.300 52V19.500a4.600 4.600 0 0 1 4.600-4.600h17a4.600 4.600 0 0 1 4.600 4.600V52"/><path d="M28.500 14.600v-1.500a4.600 4.600 0 0 1 4.600-4.600h12.900a4.600 4.600 0 0 1 4.600 4.600V52"/><path d="M17.600 22h13.600M17.600 28.500h13.600M17.600 35h13.600M24.200 45.500V52"/></g></svg>
<svg class="a" style="left:926px;top:414px" width="64" height="66" viewBox="0 0 64 66" ><g fill="none" stroke="#3f84f0" stroke-width="2" stroke-linecap="round" stroke-linejoin="round"><path d="M14.600 29.600V13.500a4.500 4.500 0 0 1 4.500-4.500h23.400a4.500 4.500 0 0 1 4.500 4.500v16.100"/><path d="M14.600 53v2.600a4.500 4.500 0 0 0 4.500 4.500h23.400a4.500 4.500 0 0 0 4.500-4.500V53"/><path d="M28.600 14.300h4.800"/><circle cx="14.700" cy="37.600" r="2.900"/><ellipse cx="14.700" cy="46.700" rx="5" ry="2.700"/><rect x="39.700" y="38.700" width="13.900" height="11.400" rx="3.300"/><path d="M44.400 41.500v.3M49 41.500v.3" stroke-width="1.200"/><path d="M43.300 38.300v-1.200a1.600 1.600 0 0 1 1.600-1.600h3.800a1.600 1.600 0 0 1 1.600 1.600v1.200"/></g></svg>
<svg class="a" style="left:1160px;top:418px" width="40" height="60" viewBox="0 0 40 60" ><g fill="none" stroke="#2fa04a" stroke-width="1.9" stroke-linecap="round" stroke-linejoin="round"><rect x="7.300" y="6.500" width="25" height="41" rx="5.800"/><rect x="11.700" y="11.300" width="16.200" height="31" rx="2.800"/><path d="M19.800 47.800v6.300M13.800 54.200h12"/></g></svg>
<svg class="a" style="left:1242px;top:378px" width="24" height="24" viewBox="0 0 24 24" ><circle cx="12" cy="12" r="11" fill="#cdebc8"/><path d="M7.800 12.300l2.900 2.900 5.600-5.800" fill="none" stroke="#3e7d46" stroke-width="1.3" stroke-linecap="round" stroke-linejoin="round"/></svg>
<div class="t" style="left:455.00px;top:152.80px;font-size:20.5px;line-height:26px;letter-spacing:-0.012px;color:#111;-webkit-text-stroke:0.35px #111;">Create new policy</div>
<div class="t" style="left:699.90px;top:482.29px;font-size:16.2px;line-height:20px;letter-spacing:-0.219px;color:#333;">Enterprise</div>
<div class="t" style="left:935.70px;top:482.29px;font-size:16.2px;line-height:20px;letter-spacing:-0.562px;color:#333;">BYOD</div>
<div class="t" style="left:1160.30px;top:482.29px;font-size:16.2px;line-height:20px;letter-spacing:-0.597px;color:#333;">Kiosk</div>
<div class="t" style="left:1192.30px;top:784.52px;font-size:19px;line-height:24px;letter-spacing:-1.347px;color:#1a3fb3;">Back</div>
<div class="t" style="left:1354.20px;top:784.52px;font-size:19px;line-height:24px;letter-spacing:-0.229px;color:#ffffff;">Next</div>
<svg class="a" style="left:1368px;top:802px" width="24" height="28" viewBox="0 0 24 28" ><path d="M8.300 2.600c1.300-.1 2 .8 2 2v6.200l.4-1c.3-.7 1.900-.7 2.300.1l.3 1.200.3-.9c.4-.7 1.900-.5 2.200.3l.3 1.300.3-.6c.5-.6 1.700-.3 1.900.6.600 2.600.8 5.300.2 7.600-.6 2.300-2.400 4.600-5.600 4.700-3 .1-4.900-.9-6.300-3.200L3 15.300c-.7-1.200.6-2.500 1.900-1.500l1.700 1.900V4.700c0-1.200.6-2 1.700-2.100z" fill="#fff" stroke="#111" stroke-width="1.300" stroke-linejoin="round"/><path d="M10.600 11.500v3.300M13.300 12v2.800M16 12.600v2.200" stroke="#555" stroke-width=".7" fill="none"/></svg>
<div id="edge" class="a"></div>

</body></html>
